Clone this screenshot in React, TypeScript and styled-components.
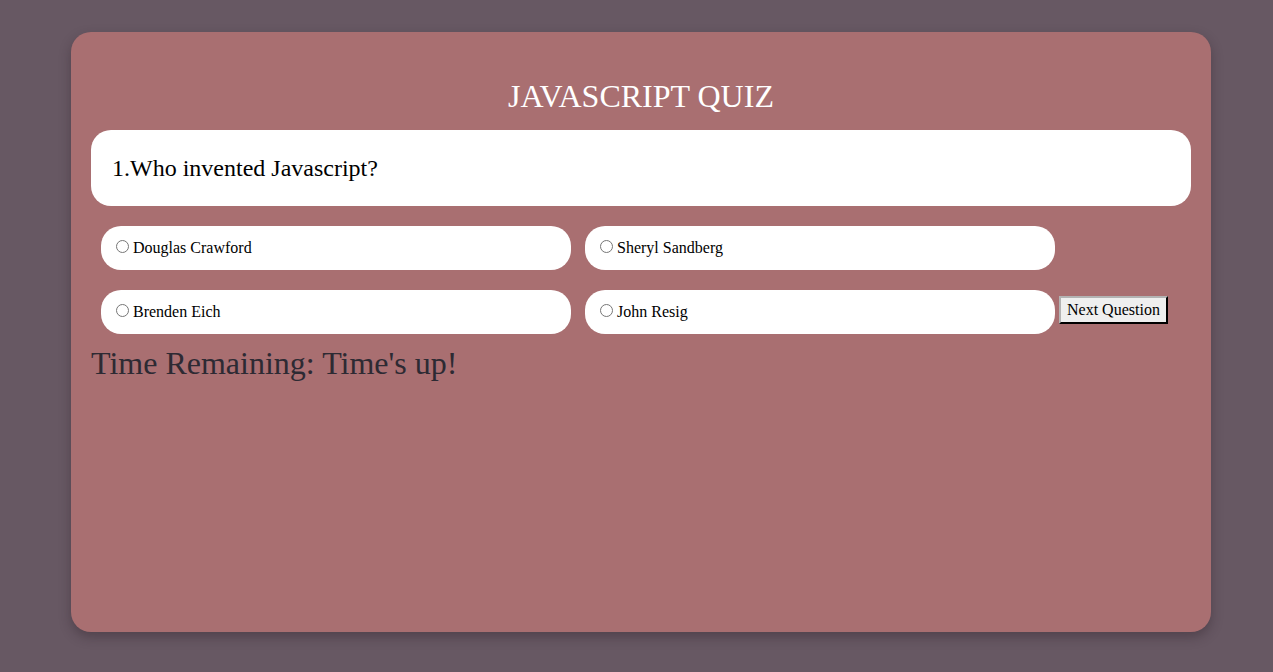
import React from "react";
import styled, { createGlobalStyle } from "styled-components";

const GlobalStyle = createGlobalStyle`
  html, body {
    margin: 0;
    padding: 0;
    background: #675863;
    font-family: "Liberation Serif", "Times New Roman", serif;
  }
`;

const Page = styled.div`
  padding: 32px 62px 40px 71px;
`;

const Card = styled.div`
  width: 1140px;
  height: 600px;
  box-sizing: border-box;
  padding: 20px;
  background: #a96f71;
  border-radius: 20px;
  box-shadow: 0 5px 12px rgba(40, 25, 35, 0.35);
`;

const Title = styled.h1`
  margin: 26px 0 0;
  height: 52px;
  font-size: 32px;
  font-weight: normal;
  line-height: 37px;
  color: #ffffff;
  text-align: center;
`;

const QuestionBox = styled.div`
  background: #ffffff;
  border-radius: 20px;
  padding: 24px 21px;
  margin-bottom: 10px;
  font-size: 24px;
  line-height: 28px;
  color: #000;
`;

const Options = styled.div`
  font-size: 16px;
  padding-left: 5px;
`;

const Option = styled.label`
  display: inline-block;
  box-sizing: border-box;
  width: 470px;
  height: 44px;
  margin: 10px 5px;
  padding: 11px 10px 0;
  background: #ffffff;
  border-radius: 20px;
  color: #000;
  vertical-align: baseline;
`;

const Radio = styled.input`
  width: 13px;
  height: 13px;
  margin: 3px 4px 0 5px;
`;

const NextButton = styled.button`
  font-family: "Liberation Serif", "Times New Roman", serif;
  font-size: 16px;
  color: #000;
  background: #efefef;
  padding: 3px 6px;
  margin-left: -1px;
  border: 2px outset;
  border-color: #b3b3b3 #2f2f2f #2f2f2f #b3b3b3;
  vertical-align: 2px;
`;

const Timer = styled.div`
  margin-top: 1px;
  font-size: 32px;
  line-height: normal;
  color: #2d2a33;
`;

const answers = ["Douglas Crawford", "Sheryl Sandberg", "Brenden Eich", "John Resig"];

export default function App() {
  return (
    <>
      <GlobalStyle />
      <Page>
        <Card>
          <Title>JAVASCRIPT QUIZ</Title>
          <QuestionBox>1.Who invented Javascript?</QuestionBox>
          <Options>
            {answers.map((a, i) => (
              <React.Fragment key={a}>
                <Option>
                  <Radio type="radio" name="answer" value={a} />
                  {a}
                </Option>
                {i < answers.length - 1 ? " " : null}
              </React.Fragment>
            ))}
            <NextButton>Next Question</NextButton>
          </Options>
          <Timer>Time Remaining: Time's up!</Timer>
        </Card>
      </Page>
    </>
  );
}
